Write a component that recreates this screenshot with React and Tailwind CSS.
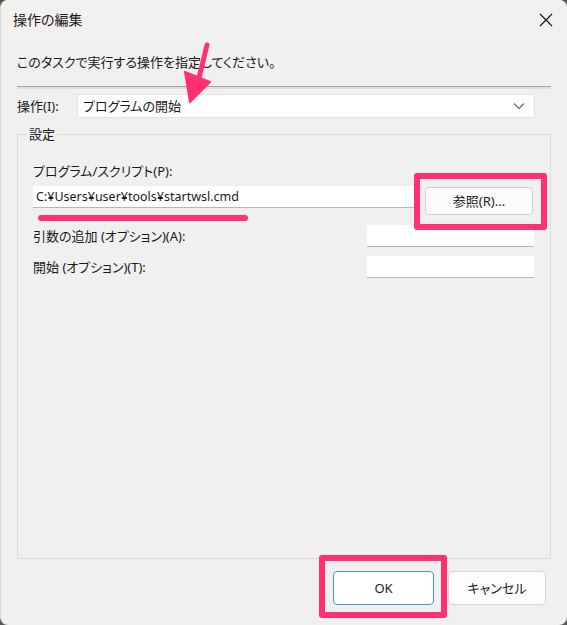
import React from 'react';

const PINK = 'border-[#ff3170]';

function TextBox({ className = '' }) {
  return <div className={`h-[22px] bg-white border-b border-[#b8b8b8] ${className}`} />;
}

export default function App() {
  return (
    <div className="w-[567px] h-[625px] bg-[#5a5a5a] font-['Noto_Sans','Noto_Sans_CJK_JP',sans-serif] text-[#1a1a1a] [font-feature-settings:'palt']">
      <div className="relative w-full h-full flex flex-col bg-[#f0f0f0] rounded-[8px] overflow-hidden border-l border-[#d8d8d8]">
        {/* title bar */}
        <div className="h-[39px] shrink-0 flex items-center justify-between pl-[12px] pr-[14px] bg-[#f3f1ef]">
          <span className="text-[14px] leading-none">操作の編集</span>
          <svg width="14" height="14" viewBox="0 0 14 14" className="text-[#1a1a1a]">
            <path d="M1 1 L13 13 M13 1 L1 13" stroke="currentColor" strokeWidth="1.2" />
          </svg>
        </div>

        <div className="flex-1 flex flex-col px-[16px]">
          <p className="mt-[13px] text-[13px] leading-[20px]">このタスクで実行する操作を指定してください。</p>
          <div className="mt-[14px] border-t border-[#a5a5a5] border-b-2 border-b-[#dedede]" />

          {/* action */}
          <div className="mt-[5px] flex items-center pr-[16px]">
            <span className="w-[60px] text-[13px] leading-none">操作(I):</span>
            <div className="flex-1 h-[24px] bg-white border border-[#e3e3e3] flex items-center justify-between pl-[5px] pr-[9px]">
              <span className="text-[13px] leading-none">プログラムの開始</span>
              <svg width="12" height="8" viewBox="0 0 12 8">
                <path d="M1 1.5 L6 6.5 L11 1.5" fill="none" stroke="#707070" strokeWidth="1.3" />
              </svg>
            </div>
          </div>

          {/* settings group */}
          <div className="relative mt-[16px] h-[425px] border border-[#dcdcdc] pl-[15px] pr-[16px] pt-[28px]">
            <span className="absolute -top-[9px] left-[9px] px-[2px] bg-[#f0f0f0] text-[13px] leading-[16px]">設定</span>

            <p className="text-[13px] leading-[16px]">プログラム/スクリプト(P):</p>

            <div className="mt-[7px] flex items-start">
              <div className="relative w-[381px]">
                <TextBox />
                <span className="absolute inset-0 flex items-center pl-[3px] text-[12.5px] leading-none">C:¥Users¥user¥tools¥startwsl.cmd</span>
                <span className="absolute left-[5px] top-[29px] w-[210px] h-[6px] rounded-full bg-[#ff3170]" />
              </div>
              <div className="relative ml-[11px] mt-[1px]">
                <button className="w-[108px] h-[28px] bg-[#fbfbfb] border border-[#d0d0d0] rounded-[4px] text-[13px] leading-none">参照(R)...</button>
                <span className={`absolute -left-[11px] -right-[14px] -top-[14px] -bottom-[15px] border-[6px] ${PINK} rounded-[3px]`} />
              </div>
            </div>

            <div className="mt-[10px] flex items-center justify-between">
              <span className="text-[13px] leading-none">引数の追加 (オプション)(A):</span>
              <TextBox className="w-[167px]" />
            </div>
            <div className="mt-[9px] flex items-center justify-between">
              <span className="text-[13px] leading-none">開始 (オプション)(T):</span>
              <TextBox className="w-[167px]" />
            </div>
          </div>

          {/* footer */}
          <div className="mt-[12px] flex justify-end gap-[14px] pr-[5px]">
            <div className="relative">
              <button className="w-[101px] h-[34px] bg-white border-[1.5px] border-[#4a98dc] rounded-[4px] text-[13px] leading-none">OK</button>
              <span className={`absolute -left-[14px] -right-[13px] -top-[16px] -bottom-[13px] border-[6px] ${PINK} rounded-[3px]`} />
            </div>
            <button className="w-[98px] h-[34px] bg-[#fdfdfd] border border-[#d5d5d5] rounded-[4px] text-[13px] leading-none">キャンセル</button>
          </div>
        </div>

        {/* annotation arrow */}
        <svg className="absolute left-0 top-0 pointer-events-none" width="567" height="625">
          <path d="M206 45 L198 78" stroke="#ff3170" strokeWidth="5" strokeLinecap="round" />
          <path d="M184 72 L209 82 L189 102 Z" fill="#ff3170" stroke="#ff3170" strokeWidth="2" strokeLinejoin="round" />
        </svg>
      </div>
    </div>
  );
}
